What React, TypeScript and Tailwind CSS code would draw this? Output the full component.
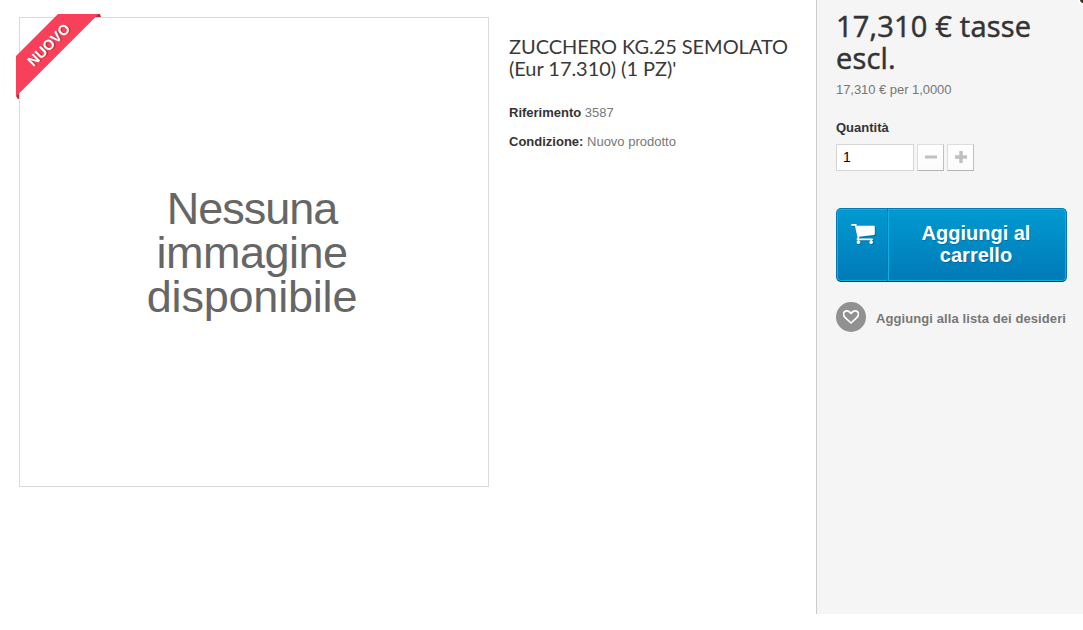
import React, { useState } from 'react';

const NewRibbon: React.FC = () => (
  <div className="absolute -left-1 -top-1 h-[85px] w-[86px]">
    <svg className="absolute inset-0" width="86" height="85" viewBox="0 0 86 85">
      {/* Folded corners behind the band */}
      <path d="M0 82L3 77.500V85H2Z" fill="#b52a37" />
      <path d="M80 0H84L85 3H78Z" fill="#b52a37" />
      <path d="M0 42L42 0H82.500L0 82.500Z" fill="#f8405a" />
    </svg>
    <span className="absolute left-[32.5px] top-[31px] -translate-x-1/2 -translate-y-1/2 -rotate-45 text-[14.5px] font-bold leading-none text-white [text-shadow:1px_1px_rgba(0,0,0,0.3)]">
      NUOVO
    </span>
  </div>
);

const CartIcon: React.FC = () => (
  <svg className="h-5 w-6 drop-shadow-[1px_1px_0_rgba(0,0,0,0.2)]" viewBox="0 256 1664 1408" fill="currentColor">
    <path d="M640 1536q0 52-38 90t-90 38-90-38-38-90 38-90 90-38 90 38 38 90zm896 0q0 52-38 90t-90 38-90-38-38-90 38-90 90-38 90 38 38 90zm128-1088v512q0 24-16.500 42.500t-40.500 21.500l-1044 122q13 60 13 70 0 16-24 64h920q26 0 45 19t19 45-19 45-45 19h-1024q-26 0-45-19t-19-45q0-11 8-31.500t16-36 21.500-40 15.500-29.500l-177-823h-204q-26 0-45-19t-19-45 19-45 45-19h256q16 0 28.500 6.500t19.500 15.500 13 24.500 8 26 5.500 29.500 4.500 26h1201q26 0 45 19t19 45z" />
  </svg>
);

const HeartIcon: React.FC = () => (
  <svg className="h-[14px] w-4" viewBox="0 0 16 14" fill="none" stroke="currentColor" strokeWidth="1.7" strokeLinejoin="round">
    <path d="M8 13L2.200 7.600C.2 5.600 .2 3.200 1.400 1.900C2.800 .4 5.500 .4 8 3.400C10.500 .4 13.200 .4 14.600 1.900C15.800 3.200 15.800 5.600 13.800 7.600Z" />
  </svg>
);

const stepButton =
  'flex h-[27px] w-[27px] items-center justify-center border border-[#dedcdc] border-r-[#c1bfbf] border-b-[#b5b4b4] bg-gradient-to-b from-white to-[#fbfbfb] pb-0.5 text-[#c0c0c0]';

export default function App() {
  const [quantity, setQuantity] = useState(1);

  return (
    <main className="flex h-[630px] w-[1083px] overflow-hidden bg-white font-['Liberation_Sans',Arial,sans-serif] text-[13px] leading-[18px] text-[#777777]">
      {/* Product image */}
      <section className="relative ml-[19px] mt-[17px] flex h-[470px] w-[470px] shrink-0 justify-center border border-[#dbdbdb]">
        <p className="mt-[169px] -ml-1 text-center text-[45px] leading-[44px] text-[#666666]">
          <span className="block tracking-[-1px]">Nessuna</span>
          <span className="block tracking-[-0.5px]">immagine</span>
          <span className="block tracking-[-0.2px]">disponibile</span>
        </p>
        <NewRibbon />
      </section>

      {/* Product details */}
      <section className="ml-5 w-[307px] shrink-0 pt-[35px]">
        <h1 className="font-[Lato,sans-serif] text-[20px] leading-[22px] tracking-[-0.05px] text-[#3a3939]">
          <span className="block whitespace-nowrap">ZUCCHERO KG.25 SEMOLATO</span>
          <span className="block whitespace-nowrap">(Eur 17.310) (1 PZ)'</span>
        </h1>
        <p className="mt-[25px]">
          <b className="text-[#333333]">Riferimento</b> <span>3587</span>
        </p>
        <p className="mt-[11px]">
          <b className="text-[#333333]">Condizione:</b> <span>Nuovo prodotto</span>
        </p>
      </section>

      {/* Purchase box */}
      <aside className="relative h-[614px] w-[267px] shrink-0 border-l border-[#cccccc] bg-[#f5f5f5] pl-[19px] pt-[10px]">
        <div className="absolute -right-1 -top-1 h-[7px] w-[7px] rounded-full bg-[#3a3020] ring-2 ring-white" />
        <p className="font-['Open_Sans',sans-serif] text-[29px] leading-8 tracking-[0.2px] text-[#333333] [-webkit-text-stroke:0.5px_#333333]">
          <span className="block whitespace-nowrap">17,310 € tasse</span>
          <span className="block">escl.</span>
        </p>
        <p className="mt-[7px] tracking-[-0.05px]">17,310 € per 1,0000</p>

        <label htmlFor="quantity" className="mt-5 block font-bold text-[#333333]">Quantità</label>
        <div className="mt-[7px] flex gap-[3px]">
          <input
            id="quantity"
            value={quantity}
            onChange={(e) => setQuantity(Number(e.target.value) || 1)}
            className="h-[27px] w-[78px] border border-[#d6d4d4] bg-white px-1.5 pb-0.5 text-[14px] text-black outline-none"
          />
          <button type="button" aria-label="Diminuisci" className={stepButton} onClick={() => setQuantity(Math.max(1, quantity - 1))}>
            <svg width="12" height="12" viewBox="0 0 12 12" fill="currentColor"><rect y="4.500" width="12" height="3" rx="0.500" /></svg>
          </button>
          <button type="button" aria-label="Aumenta" className={stepButton} onClick={() => setQuantity(quantity + 1)}>
            <svg width="12" height="12" viewBox="0 0 12 12" fill="currentColor"><path d="M4.300 0h3.400v4.300H12v3.400H7.700V12H4.300V7.700H0V4.300h4.300z" /></svg>
          </button>
        </div>

        <button
          type="button"
          className="mt-[37px] flex h-[74px] w-[231px] overflow-hidden rounded-[5px] border border-[#0079b6] border-b-[#012740] bg-gradient-to-b from-[#009ad0] to-[#007ab7] text-white shadow-[inset_0_0_0_1px_#06b2e6]"
        >
          <span className="flex h-full w-[51px] justify-center border-r border-[#0079b6] pt-[15px] pl-px">
            <CartIcon />
          </span>
          <span className="h-full flex-1 border-l border-[#06b2e6] pt-[13px] pr-[3px] text-center text-[20px] font-bold leading-[22px] [text-shadow:1px_1px_rgba(0,0,0,0.2)]">
            <span className="block">Aggiungi al</span>
            <span className="block">carrello</span>
          </span>
        </button>

        <a href="#" className="mt-5 flex items-center gap-2.5 font-bold">
          <span className="flex h-[30px] w-[30px] items-center justify-center rounded-full bg-[#919191] text-white">
            <HeartIcon />
          </span>
          <span className="whitespace-nowrap pt-1 tracking-[0.09px]">Aggiungi alla lista dei desideri</span>
        </a>
      </aside>
    </main>
  );
}
